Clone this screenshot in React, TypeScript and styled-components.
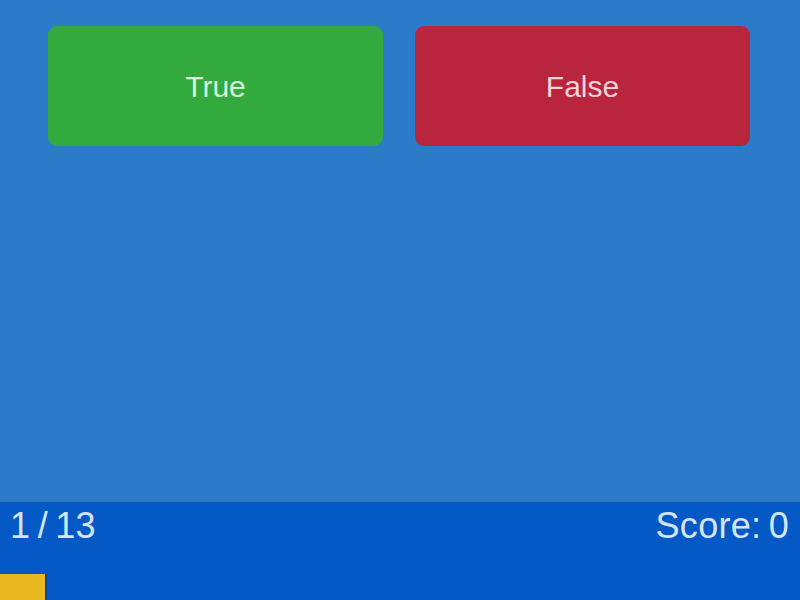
import React from 'react'
import styled, { createGlobalStyle } from 'styled-components'

const GlobalStyle = createGlobalStyle`
  html, body, #root {
    margin: 0;
    padding: 0;
    height: 100%;
  }
  body {
    font-family: 'Liberation Sans', Arial, sans-serif;
    background-color: #2c7bc9;
  }
`

const Screen = styled.div`
  display: flex;
  flex-direction: column;
  height: 600px;
  width: 800px;
  background-color: #2c7bc9;
`

const Answers = styled.div`
  flex: 1;
  display: grid;
  grid-template-columns: 1fr 1fr;
  align-content: start;
  gap: 32px;
  padding: 26px 50px 0 48px;
`

const AnswerButton = styled.button<{ tone: 'true' | 'false' }>`
  height: 120px;
  border: none;
  border-radius: 9px;
  background-color: ${(p) => (p.tone === 'true' ? '#32aa3e' : '#b9253c')};
  color: ${(p) => (p.tone === 'true' ? '#d9f0dc' : '#f3d3d9')};
  font-family: 'Liberation Sans', Arial, sans-serif;
  font-size: 30px;
  padding-top: 2px;
  cursor: pointer;
`

const Footer = styled.footer`
  height: 98px;
  display: flex;
  flex-direction: column;
  justify-content: space-between;
  background-color: #0459c6;
`

const StatusRow = styled.div`
  display: flex;
  justify-content: space-between;
  padding: 6px 11px 0 10px;
  font-size: 36px;
  line-height: 36px;
  letter-spacing: 0.3px;
  word-spacing: -3px;
  color: #d4e5f7;
`

const Progress = styled.div`
  height: 26px;
  background-color: #e9b71f;
  box-shadow: 2px 0 0 #0b3f8a;
`

const App = () => {
  const current = 1
  const total = 13
  const score = 0

  return (
    <>
      <GlobalStyle />
      <Screen>
        <Answers>
          <AnswerButton tone="true">True</AnswerButton>
          <AnswerButton tone="false">False</AnswerButton>
        </Answers>
        <Footer>
          <StatusRow>
            <span>
              {current} / {total}
            </span>
            <span>Score: {score}</span>
          </StatusRow>
          <Progress style={{ width: 45 }} />
        </Footer>
      </Screen>
    </>
  )
}

export default App
